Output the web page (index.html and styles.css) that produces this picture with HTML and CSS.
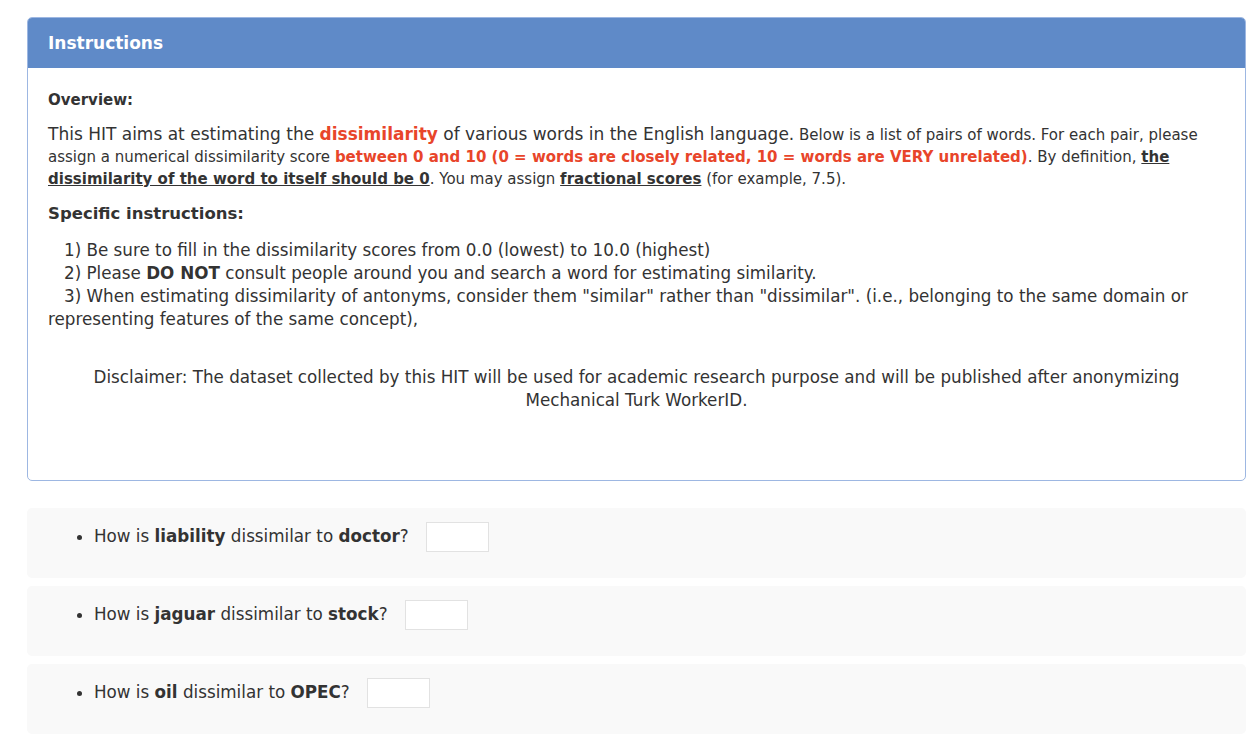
FILE: index.html
```html
<!DOCTYPE html>
<html>
<head>
<meta charset="utf-8">
<link rel="stylesheet" href="styles.css">
</head>
<body>
<div class="page">
  <section class="panel">
    <div class="panel-heading">Instructions</div>
    <div class="panel-body">
      <h4 class="overview">Overview:</h4>
      <p class="intro"><span class="big">This HIT aims at estimating the <b class="red">dissimilarity</b> of various words in the English language.</span> Below is a list of pairs of words. For each pair, please assign a numerical dissimilarity score <b class="red">between 0 and 10 (0 = words are closely related, 10 = words are VERY unrelated)</b>. By definition, <b class="ul">the dissimilarity of the word to itself should be 0</b>. You may assign <b class="ul">fractional scores</b> (for example, 7.5).</p>
      <h4 class="specific">Specific instructions:</h4>
      <p class="list">&nbsp;&nbsp;&nbsp;1) Be sure to fill in the dissimilarity scores from 0.0 (lowest) to 10.0 (highest)<br>&nbsp;&nbsp;&nbsp;2) Please <b>DO NOT</b> consult people around you and search a word for estimating similarity.<br>&nbsp;&nbsp;&nbsp;3) When estimating dissimilarity of antonyms, consider them "similar" rather than "dissimilar". (i.e., belonging to the same domain or representing features of the same concept),</p>
      <p class="disclaimer">Disclaimer: The dataset collected by this HIT will be used for academic research purpose and will be published after anonymizing Mechanical Turk WorkerID.</p>
    </div>
  </section>

  <div class="questions">
    <div class="q"><ul><li>How is <b>liability</b> dissimilar to <b>doctor</b>? <input type="text" class="score"></li></ul></div>
    <div class="q"><ul><li>How is <b>jaguar</b> dissimilar to <b>stock</b>? <input type="text" class="score"></li></ul></div>
    <div class="q"><ul><li>How is <b>oil</b> dissimilar to <b>OPEC</b>? <input type="text" class="score"></li></ul></div>
  </div>
</div>
</body>
</html>
```
FILE: styles.css
```css
html, body {
  margin: 0;
  padding: 0;
  background: #fff;
}
body {
  font-family: "DejaVu Sans", Verdana, sans-serif;
  color: #333;
  font-size: 15px;
}
.page {
  padding: 17px 12px 10px 27px;
}
.panel {
  border: 1px solid #9db7e2;
  border-radius: 5px;
  overflow: hidden;
}
.panel-heading {
  background: #5f8ac8;
  color: #fff;
  font-weight: bold;
  font-size: 17px;
  height: 50px;
  line-height: 50px;
  padding: 0 20px;
}
.panel-body {
  padding: 20px 20px 68px 20px;
}
.overview {
  margin: 2px 0 0 0;
  font-size: 15px;
  line-height: 20px;
}
.intro {
  margin: 13px 0 0 0;
  font-size: 15px;
  line-height: 22px;
}
.intro .big {
  font-size: 17px;
}
.red {
  color: #e8452a;
}
.ul {
  text-decoration: underline;
}
.specific {
  margin: 13px 0 0 0;
  font-size: 16.5px;
  line-height: 22px;
}
.list {
  margin: 14px 0 0 0;
  font-size: 16.75px;
  line-height: 23px;
}
.disclaimer {
  margin: 35px 0 0 0;
  text-align: center;
  font-size: 16.75px;
  line-height: 23px;
}
.questions {
  margin-top: 27px;
  display: flex;
  flex-direction: column;
  gap: 8px;
}
.q {
  background: #f9f9f9;
  border-radius: 5px;
  height: 70px;
  box-sizing: border-box;
  padding-top: 13px;
}
.q ul {
  margin: 0;
  padding-left: 67px;
  font-size: 16.75px;
}
.q li {
  line-height: 30px;
}
.score {
  width: 63px;
  height: 30px;
  box-sizing: border-box;
  border: 1px solid #e2e2e2;
  background: #fff;
  margin-left: 12px;
  vertical-align: middle;
  padding: 0;
}
```
